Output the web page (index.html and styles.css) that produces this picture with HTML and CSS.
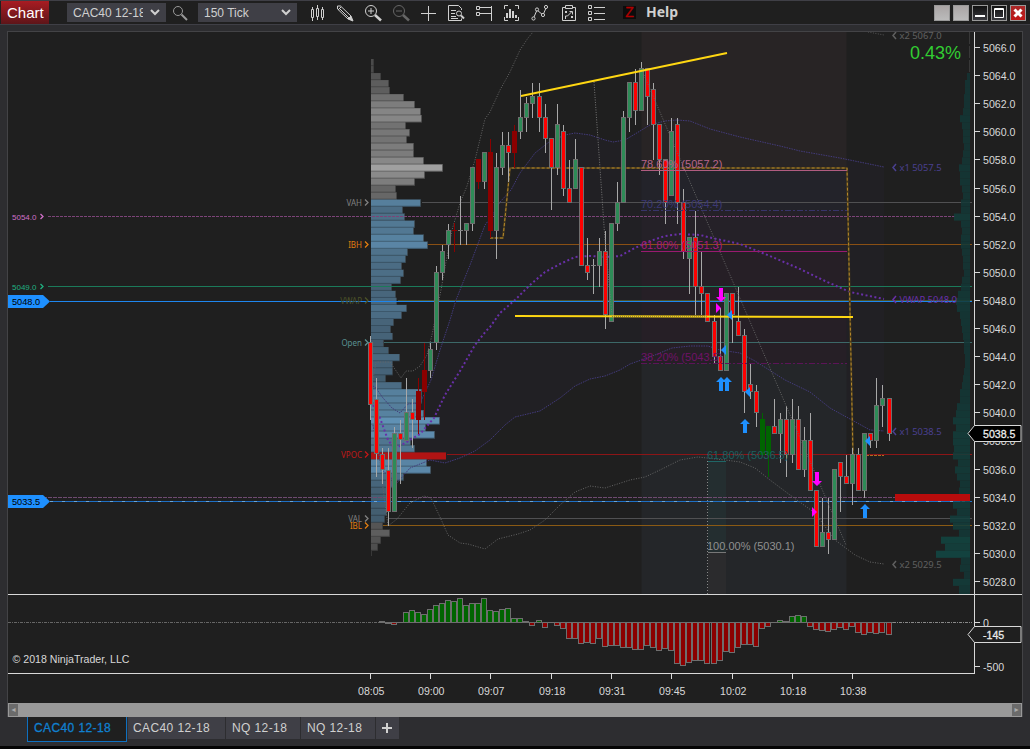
FILE: index.html
```html
<!DOCTYPE html>
<html lang="en">
<head>
    <meta charset="UTF-8">
    <meta name="viewport" content="width=device-width, initial-scale=1.0">
    <title>Chart - CAC40 12-18</title>
    <link rel="stylesheet" href="styles.css">
</head>
<body>

<header class="toolbar">
    <div class="title">Chart</div>
    <div class="select instrument"><span>CAC40 12-18</span><svg width="10" height="7"><path d="M1 1l4 4 4-4"/></svg></div>
    <svg class="search" width="16" height="16"><circle cx="6" cy="6" r="4.5"/><path d="M9.5 9.5L15 15" stroke-width="2"/></svg>
    <div class="select"><span>150 Tick</span><svg width="10" height="7"><path d="M1 1l4 4 4-4"/></svg></div>

    <nav class="icons">
        <svg viewBox="0 0 28 18"><path d="M8.500 5.500h2v8h-2zM13.500 4.500h2v8h-2zM18.500 5.500h2v8h-2zM9.500 3v2M9.500 14v3M14.500 1v3M14.500 13v3M19.500 3v2M19.500 14v2"/></svg>
        <svg viewBox="0 0 28 18"><path d="M6.500 2l3 0L20 12l-3 3L6.500 5zM8 4l10 10M10 3l-3 3"/><path d="M17 15l3-3 2 5z" fill="#d0d0d0"/></svg>
        <svg viewBox="0 0 28 18"><circle cx="12" cy="7" r="5.500"/><path d="M9 7h6M12 4v6"/><path d="M16 11l6 5.500" stroke-width="2.500"/></svg>
        <svg viewBox="0 0 28 18" class="off"><circle cx="12" cy="7" r="5.500"/><path d="M9 7h6"/><path d="M16 11l6 5.500" stroke-width="2.500"/></svg>
        <svg viewBox="0 0 28 18"><path d="M6 9.500h15M13.500 2v15"/></svg>
        <svg viewBox="0 0 28 18"><path d="M18.500 6V4.500l-3-3H5.500v15h13v-2M8 6.500h5M8 9.500h4M8 12.500h5M8 14.500h7"/><circle cx="16" cy="9.500" r="2.500"/><path d="M18 11.500l3 3" stroke-width="2"/></svg>
        <svg viewBox="0 0 28 18"><path d="M5.500 2.500h3v3h-3zM5.500 8.500h3v3h-3zM9 3.500h12M9 9.500h12M20.500 2v15" /></svg>
        <svg viewBox="0 0 28 18"><path d="M9 1.500H5.500V5M16 1.500h3.500V5M9 16.500H5.500V13M16 16.500h3.500V13"/><path d="M8 14V9M11 14V5M14 14V7M17 14v-3" stroke-width="2"/></svg>
        <svg viewBox="0 0 28 18"><path d="M7 13l3-7 6 5 3-7"/><g fill="#1f1f1f"><circle cx="6.500" cy="14.500" r="1.600"/><circle cx="10" cy="5.500" r="1.600"/><circle cx="16" cy="11" r="1.600"/><circle cx="19" cy="3" r="1.600"/></g></svg>
        <svg viewBox="0 0 28 18"><path d="M10 3.500H7.500v13h13v-13H18M10.500 1.500h7v3h-7zM10 7l2 2M12 7l-2 2M16 12l2 2M18 12l-2 2M10.500 15v-3h2l4-4M14.500 7.500h3v3"/></svg>
        <svg viewBox="0 0 28 18"><path d="M5.500 1.500h3v3h-3zM5.500 7.500h3v3h-3zM5.500 13.500h3v3h-3zM11 3.500h11M11 9.500h11M11 15.500h11"/></svg>
    </nav>
    <div class="zbox">Z</div>
    <div class="help">Help</div>

    <div class="window-buttons">
        <i></i>
        <i></i>
        <i class="dark"><svg width="14" height="14"><path d="M2 10h10" stroke-width="2"/></svg></i>
        <i class="dark"><svg width="14" height="14"><path d="M2.500 2.500h9v9h-9zM2 3.500h10"/></svg></i>
        <i class="close"><svg width="14" height="14"><path d="M3.500 3.500l7 7M10.500 3.500l-7 7" stroke-width="3"/></svg></i>
    </div>
</header>

<main class="panel">
    <svg id="chart" class="chart" width="1014" height="671" viewBox="8 32 1014 671"></svg>
    <div class="scrollbar"><span>◂</span><span>▸</span></div>
</main>

<footer class="tabs">
    <div class="tab active">CAC40 12-18</div>
    <div class="tab wide">CAC40 12-18</div>
    <div class="tab">NQ 12-18</div>
    <div class="tab">NQ 12-18</div>
    <div class="tab add"><svg width="12" height="12"><path d="M6 1v10M1 6h10"/></svg></div>
</footer>

<script src="chart.js"></script>
</body>
</html>
```
FILE: styles.css
```css
* {
    box-sizing: border-box;
}

body {
    margin: 0;
    width: 1030px;
    height: 749px;
    overflow: hidden;
    background: #2d2d30;
    border-bottom: 3px solid #050505;
    font-family: "Liberation Sans", Arial, sans-serif;
    color: #d0d0d0;
}

/* top bar */
.toolbar {
    display: flex;
    align-items: center;
    height: 25px;
    padding: 0 4px 0 1px;
    background: #1f1f1f;
    border-top: 1px solid #3f3f46;
    border-bottom: 1px solid #3f3f46;
}

.title {
    width: 48px;
    height: 23px;
    padding-left: 6px;
    font-size: 15px;
    line-height: 24px;
    color: #fff;
    background: linear-gradient(#a81c22, #5e1519);
}

.select {
    display: flex;
    align-items: center;
    justify-content: space-between;
    width: 99px;
    height: 19px;
    padding: 0 6px;
    font-size: 12px;
    background: #3f3f46;
    white-space: nowrap;
}

.select span {
    overflow: hidden;
    max-width: 70px;
}

.select svg {
    flex: none;
    fill: none;
    stroke: #d0d0d0;
    stroke-width: 2;
}

.instrument {
    margin-left: 18px;
}

.search {
    margin: 0 10px 0 6px;
    fill: none;
    stroke: #999;
}

.icons {
    display: flex;
    margin-left: 6px;
}

.icons svg {
    width: 28px;
    height: 18px;
    fill: none;
    stroke: #d0d0d0;
}

.icons .off {
    stroke: #666;
}

.zbox {
    width: 13px;
    height: 13px;
    margin-left: 12px;
    background: #0c0c0c;
    color: #b00000;
    font-size: 14px;
    line-height: 13px;
    text-align: center;
    -webkit-text-stroke: 0.4px;
}

.help {
    margin: -2px 0 0 10px;
    font: bold 14px/20px "Noto Sans", sans-serif;
}

.window-buttons {
    display: flex;
    gap: 3px;
    margin-left: auto;
}

.window-buttons i {
    width: 16px;
    height: 16px;
    border: 1px solid #999;
    background: linear-gradient(#aaa5a5, #bbb);
}

.window-buttons .dark {
    background: linear-gradient(#111, #3a3a3f);
}

.window-buttons .close {
    background: linear-gradient(#a82828, #c01818);
}

.window-buttons svg {
    display: block;
    fill: none;
    stroke: #fff;
}

/* chart area */
.panel {
    width: 1016px;
    margin: 6px 0 0 7px;
    border: 1px solid #434346;
    border-bottom: 0;
    background: #1f1f1f;
}

.chart {
    display: block;
}

.chart text {
    white-space: pre;
}

.axis {
    font-size: 10.6px;
    fill: #d8d8d8;
}

.fib {
    font-size: 11px;
}

.level {
    font: 8px "Noto Sans", sans-serif;
    text-anchor: end;
}

.band {
    font: 9.4px "Noto Sans", sans-serif;
}

.tag {
    font-size: 8px;
}

.flag {
    font-size: 9.2px;
}

.change {
    font-size: 18px;
    fill: #32cd32;
}

.scrollbar {
    display: flex;
    justify-content: space-between;
    height: 14px;
    padding: 1px;
    background: #999;
}

.scrollbar span {
    width: 9px;
    height: 12px;
    background: #6b6b6b;
    color: #aaa;
    font: 8px/12px "DejaVu Sans", sans-serif;
    text-align: center;
}

/* workspace tabs */
.tabs {
    display: flex;
    gap: 1px;
    padding-left: 27px;
}

.tab {
    width: 74px;
    height: 22px;
    padding-left: 6px;
    font-size: 12px;
    line-height: 23px;
    letter-spacing: 0.4px;
    background: #3f3f46;
    white-space: nowrap;
}

.tab.wide {
    width: 97px;
    padding-left: 5px;
}

.tab.active {
    width: 100px;
    height: 25px;
    color: #1080d0;
    background: #1f1f1f;
    border: 1px solid #0e70c0;
    border-top: 0;
    -webkit-text-stroke: 0.3px;
}

.tab.add {
    width: 23px;
}

.tab svg {
    display: block;
    margin: 5px 0 0 -1px;
    stroke: #d0d0d0;
    stroke-width: 2;
}
```
FILE: chart.js
```js
const svg = document.getElementById('chart');
let out = '';

// Small drawing helpers
function rect(x, y, w, h, fill, extra = '') {
    out += `<rect x="${x}" y="${y}" width="${w}" height="${h}" fill="${fill}" ${extra}/>`;
}
function line(x1, y1, x2, y2, color, dash = '', w = 1) {
    out += `<line x1="${x1}" y1="${y1}" x2="${x2}" y2="${y2}" stroke="${color}" stroke-width="${w}" stroke-dasharray="${dash}"/>`;
}
function text(x, y, str, cls, fill = '') {
    out += `<text x="${x}" y="${y}" class="${cls}" ${fill ? `fill="${fill}"` : ''}>${str}</text>`;
}
function curve(points, color, dash, w = 1) {
    out += `<polyline points="${points}" fill="none" stroke="${color}" stroke-width="${w}" stroke-dasharray="${dash}"/>`;
}
function poly(points, fill, stroke = 'none') {
    out += `<polygon points="${points}" fill="${fill}" stroke="${stroke}"/>`;
}
function mix(a, b, t) {
    return 'rgb(' + a.map((v, i) => Math.round(v + (b[i] - v) * t)).join(',') + ')';
}

const upper1 = '373,386 376,388 383,398 392,408 400,413 408,404 420,403 431,380 440,350 450,320 456,300 460,290 470,265 485,225 492,216 500,202 511,190 520,173 535,153 549,142 565,135 575,133 590,135 605,140 613,142 625,140 640,131 650,125 665,121 677,120 690,121 710,129 740,137 780,146 800,151 840,158 884,167';
const lower1 = '373,425 382,470 397,483 410,468 430,460 445,463 460,458 475,451 490,440 505,425 515,417 540,411 560,398 575,386 590,379 605,376 620,370 630,364 650,357 672,348 690,346 708,346 720,350 740,353 755,361 785,380 810,392 830,408 850,419 870,430 884,431';
const upper2 = '372,385 376,362 390,362 401,378 406,371 413,371 420,366 427,355 432,335 437,310 441,290 446,262 452,230 460,203 467,186 475,160 485,119 490,112 500,90 510,72 520,50 528,38 533,32';
const lower2 = '376,425 382,480 388,526 397,519 410,503 424,496 431,498 440,517 448,535 460,543 468,544 485,549 498,539 518,534 530,530 545,520 560,505 575,492 590,486 605,488 630,480 645,477 660,470 680,460 698,457 725,460 740,462 755,468 770,480 790,495 815,513 835,540 855,555 870,562 884,564';
const vwap = '373,405 380,418 388,440 395,449 405,443 420,434 434,418 445,395 460,371 475,345 486,331 490,327 500,313 515,300 530,285 545,272 560,264 575,257 590,256 605,257 620,256 635,248 650,241 665,236 680,234 700,235 712,238 740,244 770,256 800,269 825,281 850,292 884,299';

// Deviation band and retracement zones
out += `<polygon points="${upper1} ${lower1.split(' ').reverse().join(' ')}" fill="#3a3060" opacity="0.08"/>`;
rect(641.5, 32, 205, 138, '#282425');
rect(641.5, 170, 205, 40, '#23232a');
rect(641.5, 210, 205, 41, '#252128');
rect(641.5, 251, 205, 112, '#261f26');
rect(641.5, 363, 205, 231, '#242629');
rect(708, 461, 18, 91, '#242e30');
rect(708, 552, 18, 42, '#2b2b2d');

// Session volume profile, one bar for each half point
const profile = [3, 3, 10, 18, 19, 33, 44, 50, 51, 35, 39, 36, 43, 43, 53, 72, 54, 44, 25, 26,
    50, 32, 34, 44, 43, 53, 57, 37, 35, 31, 33, 30, 21, 25, 26, 36, 31, 23, 20, 22, 13, 18, 29, 22, 22, 15, 31,
    51, 51, 49, 53, 69, 55, 64, 40, 44, 75, 56, 60, 33, 24, 19, 17, 17, 16, 14, 12, 19, 10, 7];
profile.forEach((w, i) => {
    const y = 59 + i * 7.025;
    const grey = i < 20 || i > 65;
    let color = grey ? mix([70, 70, 70], [160, 160, 160], w / 72) : mix([58, 78, 92], [98, 148, 184], w / 72);
    if (i === 56) color = '#b01414';
    rect(371, y, w, 7.1, color);
    if (i !== 56) {
        line(371, y + 6.6, 371 + w, y + 6.6, 'rgba(0,0,0,0.22)');
        line(370.5 + w, y, 370.5 + w, y + 7, 'rgba(50,50,50,0.6)');
    }
});
line(371.5, 550, 371.5, 556, '#383838');

// Horizontal levels
line(422, 202.5, 972, 202.5, '#505052');
line(48, 216.5, 955, 216.5, '#7c4478', '3 1');
line(428, 244.5, 972, 244.5, '#8a5014');
line(48, 286.5, 972, 286.5, '#1b7a5a');
line(398, 300.5, 972, 300.5, '#4c5228');
line(50, 301.5, 972, 301.5, '#1e86ee');
line(384, 342.5, 972, 342.5, '#3c6868');
line(447, 454.5, 972, 454.5, '#8c1517');
line(8, 497.5, 895, 497.5, '#6e4a70', '4 1');
line(50, 501.5, 972, 501.5, '#1e6fc4');
line(50, 501.5, 972, 501.5, '#69a6dc', '3 9');
line(388, 518.5, 972, 518.5, '#505052');
line(383, 525.5, 972, 525.5, '#8a5a14');

curve(upper2, '#666', '1 1.5');
curve(lower2, '#666', '1 1.5');
curve('868,32 884,35', '#555', '1 1.5');
curve(upper1, '#433b7c', '1.5 1');
curve(lower1, '#433b7c', '1.5 1');
curve(vwap, '#6930a8', '2 2.5', 2);
const rangeHigh = '490,238 503,238 510,168 847,168 853,455';
curve(rangeHigh, '#4a3c1c', '', 2);
curve(rangeHigh, '#b8892a', '3 2', 1);
curve('866,455.5 884,455.5', '#b06a20', '3 1', 1);

// Candles: x, high, top, bottom, low, kind
const colors = { r: '#ff0000', g: '#2e8b57', d: '#8b0000', G: '#006400' };
const candles = `370.5 336 342 405 420 r|376.5 378 399 454 477 r|382.5 448 454 470 484 r|388.5 448 470 512 526 r
394.5 427 433 512 512 g|400.5 420 433 440 484 r|406.5 378 412 441 441 g|412.5 399 412 420 448 r
418.5 378 391 420 434 d|424.5 343 370 392 420 d|430.5 343 349 371 378 g|436.5 266 272 343 350 g
442.5 245 251 273 280 g|448.5 224 230 245 259 g|454.5 223 230 231 252 d|460.5 196 230 231 245 n
466.5 223 223 231 245 g|472.5 167 167 224 231 g|478.5 159 159 182 189 d|484.5 152 152 182 189 g
490.5 139 152 231 238 d|496.5 153 167 231 259 g|502.5 132 145 168 175 g|508.5 132 145 153 182 r
514.5 125 131 153 168 d|520.5 90 117 132 139 g|526.5 97 103 118 132 g|532.5 83 96 104 118 g
539.5 83 96 118 132 r|545.5 104 117 139 153 r|551.5 138 138 168 210 r|557.5 104 124 168 175 g
563.5 125 131 189 196 r|569.5 160 188 203 203 r|575.5 139 159 189 189 g|581.5 167 167 266 266 r
587.5 238 265 273 280 r|593.5 259 265 266 294 n|599.5 238 251 266 287 g|605.5 231 251 315 329 r
611.5 223 223 322 322 g|617.5 182 202 224 231 g|623.5 111 117 203 203 g|629.5 82 82 118 132 g
635.5 69 82 111 125 r|641.5 62 68 111 111 g|647.5 68 68 97 125 r|653.5 83 89 125 160 r
659.5 124 124 160 175 r|665.5 159 159 203 224 r|671.5 118 131 196 196 g|677.5 118 124 203 224 r
683.5 189 202 252 259 r|689.5 237 237 259 294 g|695.5 211 237 287 315 r|701.5 252 286 294 315 r
707.5 293 293 322 322 r|714.5 315 321 357 364 r|720.5 308 356 371 371 r|726.5 293 293 371 371 g
732.5 293 293 315 343 r|738.5 287 321 336 336 r|744.5 329 335 392 413 r|750.5 364 384 392 399 r
756.5 385 391 413 427 r|762.5 413 419 455 455 G|768.5 426 426 455 477 G|774.5 399 426 434 434 r
780.5 413 419 434 463 g|786.5 406 419 455 477 r|792.5 399 419 455 463 g|798.5 406 419 470 470 r
804.5 427 440 470 477 g|810.5 413 440 491 491 r|816.5 490 490 547 547 r|822.5 498 532 547 547 g
828.5 498 532 540 554 r|834.5 469 469 540 540 g|840.5 462 462 477 512 r|846.5 455 476 484 484 r
852.5 448 454 484 505 g|858.5 448 454 491 491 r|864.5 433 433 491 498 g|870.5 433 433 441 448 r
876.5 378 405 441 448 g|882.5 385 398 406 427 g|889.5 398 398 434 441 r`.split(/[|\n]/);
candles.forEach(c => {
    const p = c.split(' ');
    const [x, high, top, bottom, low] = p.map(Number);
    const kind = p[5];
    const solid = kind === 'd' || kind === 'G';
    line(x, high, x, low, solid ? colors[kind] : '#a8a8a8');
    if (bottom - top < 2) {
        line(x - 2.5, top + 0.5, x + 2.5, top + 0.5, solid ? colors[kind] : '#808080');
    } else {
        rect(x - 2, top + 0.5, 4, bottom - top - 1, colors[kind], `stroke="${solid ? colors[kind] : '#6e6e6e'}"`);
    }
});

// Swing legs
curve('594,82 605,240 612,315', '#777', '1 1.5');
curve('641,68 846,545', '#666', '1 1.5');
line(707.5, 461, 707.5, 594, '#888', '1 2');

// Retracement levels
line(641, 170.5, 847, 170.5, '#b05c80');
line(641, 210.5, 847, 210.5, '#38346a', '6 2 2 2');
line(641, 251.5, 847, 251.5, '#9a1a70');
line(641, 363.5, 847, 363.5, '#5c1458', '6 2 2 2');
line(708, 461.5, 726, 461.5, '#1f6666');
line(708, 552.5, 726, 552.5, '#777');
text(641, 168, '78.60% (5057.2)', 'fib', '#b8648a');
text(641, 208, '70.20% (5054.4)', 'fib', '#3c3874');
text(641, 249, '61.80% (5051.3)', 'fib', '#a81a7a');
text(641, 361, '38.20% (5043.5)', 'fib', '#701268');
text(707, 459, '61.80% (5036.5)', 'fib', '#1d6060');
text(707, 550, '100.00% (5030.1)', 'fib', '#909090');

// Trend lines
line(521, 96, 727, 53, '#ffd712', '', 2);
line(515, 316, 853, 317, '#ffd712', '', 2);
line(612, 316.5, 707, 316.8, '#8a8040', '1 1');

// Execution markers
function arrow(x, y, dir, color) {
    poly([[0, 0], [5, 5], [2, 5], [2, 14], [-2, 14], [-2, 5], [-5, 5]].map(p => `${x + p[0]},${y + dir * p[1]}`).join(' '), color);
}
arrow(721, 302, -1, '#ff00ff');
arrow(817, 486, -1, '#ff00ff');
arrow(721, 377, 1, '#1e90ff');
arrow(727, 377, 1, '#1e90ff');
arrow(745, 419, 1, '#1e90ff');
arrow(865, 504, 1, '#1e90ff');
[[716, 308], [812, 512]].forEach(([x, y]) => poly(`${x},${y - 5} ${x + 5},${y} ${x},${y + 5}`, '#ff00ff'));
[[732, 315], [726, 350], [750, 392], [870, 441]].forEach(([x, y]) => poly(`${x},${y - 5} ${x - 5},${y} ${x},${y + 5}`, '#1e90ff'));

// Composite profile on the right edge
const composite = [3, 5, 5, 6, 6, 7, 10, 8, 7, 7, 6, 7, 8, 11, 10, 10, 8, 7, 9, 9, 16, 9, 8, 9,
    9, 8, 7, 7, 6, 8, 9, 12, 14, 13, 10, 9, 8, 7, 6, 6, 5, 5, 6, 7, 8, 10, 10, 13, 14, 17, 14, 17, 17, 16, 17,
    12, 15, 13, 10, 11, 10, 17, 13, 20, 17, 11, 29, 25, 34, 9, 10, 6, 17, 11, 11];
line(969.5, 32, 969.5, 73, '#383838', '12 2');
composite.forEach((w, i) => {
    const y = 73 + i * 7.025;
    if (y < 594) rect(970 - w, y, w, Math.min(7.1, 594 - y), mix([20, 50, 50], [18, 72, 68], w / 34), 'opacity="0.88"');
});
rect(895, 494, 75, 7, '#b80c0c');

// Level names on the left
const levels = [
    [202.5, 'VAH', '#808080'], [244.5, 'IBH', '#e07c10'], [300.5, 'VWAP', '#4c5228'], [342.5, 'Open', '#5a9090'],
    [454.5, 'VPOC', '#c01818'], [518.5, 'VAL', '#808080'], [525.5, 'IBL', '#e07c10']
];
levels.forEach(([y, name, color]) => {
    text(362, y + 3, name, 'level', color);
    curve(`365,${y - 3} 368,${y} 365,${y + 3}`, color, '', 1.3);
});

// Band names on the right
[[35.5, 'x2 5067.0', '#606060'], [167.5, 'x1 5057.5', '#4a4090'], [299.5, 'VWAP 5048.0', '#6930a8'],
    [431.5, 'x1 5038.5', '#4a4090'], [564.5, 'x2 5029.5', '#606060']].forEach(([y, name, color]) => {
    text(899.5, y + 3.5, name, 'band', color);
    curve(`896,${y - 3.5} 893,${y} 896,${y + 3.5}`, color, '', 1.5);
});

// Price flags on the left
[[216.5, '5054.0', '#d070c8'], [286.5, '5049.0', '#20b080']].forEach(([y, price, color]) => {
    text(12, y + 3, price, 'tag', color);
    curve(`40.500,${y - 2.5} 43,${y} 40.500,${y + 2.5}`, color, '', 1.3);
});
[[301.5, '5048.0'], [501.5, '5033.5']].forEach(([y, price]) => {
    poly(`8,${y - 6.5} 43,${y - 6.5} 50,${y} 43,${y + 6.5} 8,${y + 6.5}`, '#1e90ff');
    text(12, y + 3.5, price, 'flag', '#000');
});
text(910, 59, '0.43%', 'change');

// Momentum histogram: zero line at 622.5
line(8, 622.5, 382, 622.5, '#666', '3 1 1 1');
line(380, 622.5, 893, 622.5, '#707070');
line(893, 622.5, 972, 622.5, '#888', '3 1 1 1');
const histogram = [1, -1, -2, 0, 10, 12, 10, 8, 13, 17, 19, 22, 21, 24, 17, 19, 19, 24, 12, 11, 13, 14, 4, 4, 1, -3, 2, -5, 0, -3, -6,
    -16, -16, -21, -20, -21, -16, -24, -23, -23, -25, -25, -27, -27, -23, -25, -28, -26, -28, -41, -43, -40, -38, -38, -41,
    -41, -38, -29, -30, -25, -22, -22, -24, -6, -4, 0, 2, 1, 6, 7, 6, -4, -7, -8, -9, -7, -5, -7, -4, -10, -12, -10, -11, -10, -12];
histogram.forEach((v, i) => {
    const x = Number(candles[i + 2].split(' ')[0]);
    if (!v) return;
    rect(x - 3, v > 0 ? 622.5 - v : 622.5, 5, Math.abs(v), v > 0 ? '#006400' : '#8b0000', 'stroke="#6e6e6e"');
});

// Axes
line(8, 594.5, 1022, 594.5, '#d8d8d8');
line(8, 673.5, 975, 673.5, '#d8d8d8');
line(974.5, 32, 974.5, 674, '#d8d8d8');
for (let price = 5066; price >= 5028; price -= 2) {
    const y = Math.floor(47.5 + (5066 - price) * 14.05) + 0.5;
    line(975, y, 980, y, '#d8d8d8');
    text(983, y + 4, price.toFixed(1), 'axis');
}
[[622.5, '0'], [666.5, '-500']].forEach(([y, label]) => {
    line(975, y, 980, y, '#d8d8d8');
    text(983, y + 4, label, 'axis');
});
[[370.5, '08:05'], [430.5, '09:00'], [490.5, '09:07'], [551.5, '09:18'], [611.5, '09:31'],
    [671.5, '09:45'], [732.5, '10:02'], [792.5, '10:18'], [852.5, '10:38']].forEach(([x, label]) => {
    line(x, 674, x, 679, '#d8d8d8');
    text(x - 12.5, 695, label, 'axis');
});
poly('968,433.5 974.5,425.5 1021,425.5 1021,441.5 974.5,441.5', '#000', '#d8d8d8');
poly('968,634.5 974.5,626.5 1021,626.5 1021,642.5 974.5,642.5', '#1f1f1f', '#d8d8d8');
out += '<g stroke="#fff" stroke-width="0.3">';
text(983, 438, '5038.5', 'axis');
text(983, 639, '-145', 'axis');
out += '</g>';
text(12.5, 663, '© 2018 NinjaTrader, LLC', 'axis');

svg.innerHTML = out;
```
